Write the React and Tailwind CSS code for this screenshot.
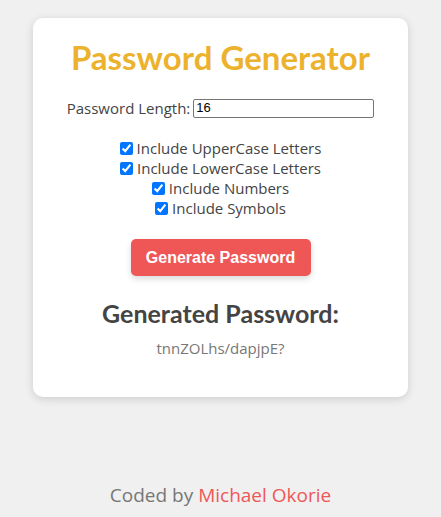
import React, { useState } from 'react';

const options = [
  { key: 'upper', label: 'Include UpperCase Letters' },
  { key: 'lower', label: 'Include LowerCase Letters' },
  { key: 'numbers', label: 'Include Numbers' },
  { key: 'symbols', label: 'Include Symbols' },
];

export default function App() {
  const [length, setLength] = useState('16');
  const [checked, setChecked] = useState({ upper: true, lower: true, numbers: true, symbols: true });
  const [password] = useState('tnnZOLhs/dapjpE?');

  return (
    <div
      className="min-h-screen bg-[#f0f0f0] flex flex-col items-center"
      style={{ fontFamily: '"Open Sans", Lato, sans-serif' }}
    >
      <div className="mt-[18px] w-[375px] bg-white rounded-[10px] shadow-[0_2px_8px_rgba(0,0,0,0.15)] flex flex-col items-center pt-[19px] pb-[39px]">
        <h1 className="text-[33px] leading-[40px] font-bold text-[#ecb22e] font-['Lato',sans-serif]">Password Generator</h1>

        <div className="mt-[21px] flex items-center text-[15px] text-[#444] leading-[20px]">
          <span className="mr-[3px]">Password Length:</span>
          <input
            type="text"
            value={length}
            onChange={e => setLength(e.target.value)}
            className="w-[181px] h-[19px] border border-[#767676] rounded-[2px] px-[2px] text-[13px] text-black bg-white"
            style={{ fontFamily: 'Arial, "Liberation Sans", sans-serif' }}
          />
        </div>

        <div className="mt-[20px] flex flex-col items-center text-[15px] text-[#444] leading-[20px]">
          {options.map(o => (
            <label key={o.key} className="flex items-center">
              <input
                type="checkbox"
                checked={checked[o.key]}
                onChange={() => setChecked({ ...checked, [o.key]: !checked[o.key] })}
                className="w-[13px] h-[13px] mr-[4px] accent-[#0075ff]"
              />
              {o.label}
            </label>
          ))}
        </div>

        <button
          className="mt-[21px] w-[180px] h-[37px] rounded-[5px] bg-[#ef5757] text-white text-[16px] font-bold shadow-[0_3px_6px_rgba(0,0,0,0.15)]"
          style={{ fontFamily: 'Arial, "Liberation Sans", sans-serif' }}
        >
          Generate Password
        </button>

        <h2 className="mt-[22px] text-[25px] leading-[30px] font-bold text-[#444] font-['Lato',sans-serif]">Generated Password:</h2>
        <p className="mt-[10px] text-[15px] text-[#777] leading-[20px]">{password}</p>
      </div>

      <p className="mt-[84px] text-[19px] text-[#777]">
        Coded by <span className="text-[#ef5757]">Michael Okorie</span>
      </p>
    </div>
  );
}
